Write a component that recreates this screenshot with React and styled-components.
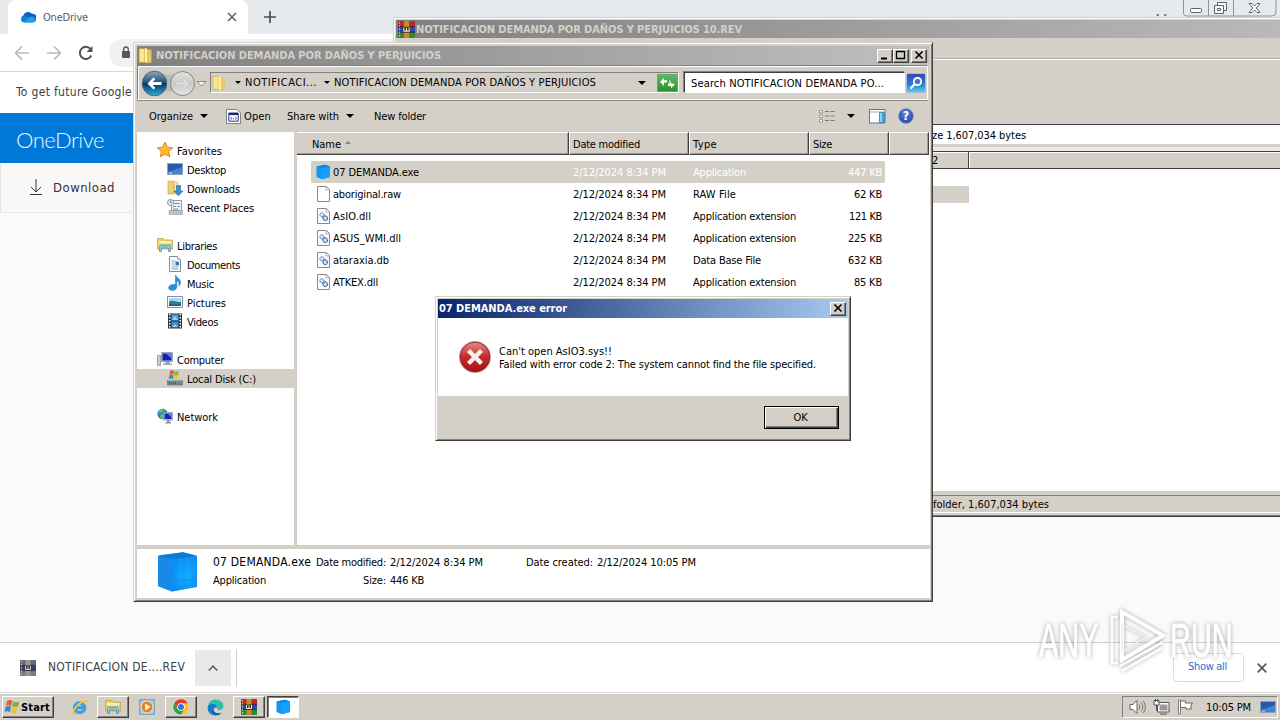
import React, { useLayoutEffect, useRef, useState } from 'react';
import styled, { createGlobalStyle, css } from 'styled-components';

const FACE = '#d4d0c8';
const DARK = '#404040';
const MID = '#808080';

const navGroups = [
  {
    icon: 'star',
    label: 'Favorites',
    width: 45,
    items: [
      { icon: 'desktop', label: 'Desktop', width: 39 },
      { icon: 'downloads', label: 'Downloads', width: 53 },
      { icon: 'recent', label: 'Recent Places', width: 67 },
    ],
  },
  {
    icon: 'libraries',
    label: 'Libraries',
    width: 40,
    items: [
      { icon: 'document', label: 'Documents', width: 53 },
      { icon: 'music', label: 'Music', width: 27 },
      { icon: 'picture', label: 'Pictures', width: 39 },
      { icon: 'video', label: 'Videos', width: 31 },
    ],
  },
  {
    icon: 'computer',
    label: 'Computer',
    width: 47,
    items: [{ icon: 'disk', label: 'Local Disk (C:)', width: 69, active: true }],
  },
  { icon: 'network', label: 'Network', width: 41, items: [] },
];

const files = [
  { icon: 'cube', name: '07 DEMANDA.exe', width: 86, type: 'Application', typeWidth: 53, size: '447 KB', sizeWidth: 34, active: true },
  { icon: 'file', name: 'aboriginal.raw', width: 68, type: 'RAW File', typeWidth: 43, size: '62 KB', sizeWidth: 28 },
  { icon: 'dll', name: 'AsIO.dll', width: 38, type: 'Application extension', typeWidth: 103, size: '121 KB', sizeWidth: 33 },
  { icon: 'dll', name: 'ASUS_WMI.dll', width: 68, type: 'Application extension', typeWidth: 103, size: '225 KB', sizeWidth: 34 },
  { icon: 'dll', name: 'ataraxia.db', width: 56, type: 'Data Base File', typeWidth: 68, size: '632 KB', sizeWidth: 34 },
  { icon: 'dll', name: 'ATKEX.dll', width: 45, type: 'Application extension', typeWidth: 103, size: '85 KB', sizeWidth: 28 },
];

const icons = {
  cloud: (
    <>
      <path d="M3.500 13a3.500 3.500 0 0 1-.2-6.500A5 5 0 0 1 12 4.800a4 4 0 0 1 1.500 8.200z" fill="#0a5fb8" />
      <path d="M1.500 12C.5 9 3 6.500 6 6.800L14.500 12Q14 13.400 13 13.400H4Q2.500 13.400 1.500 12z" fill="#1680da" />
      <path d="M9 8.500a4 4 0 0 1 6.700 2.600 2.200 2.200 0 0 1-2.100 2.300H4z" fill="#25a0e8" />
    </>
  ),
  folder: (
    <>
      <path d="M2 1.500h6v13H2z" fill="#e9c557" stroke="#c9a136" strokeWidth=".5" />
      <path d="M2.500 2h4v12h-4z" fill="#fbe98f" />
      <path d="M7.500 1l2.500.8V15l-2.500-.6z" fill="#fff3b0" />
      <path d="M10 2l3.500 1v11.500L10 15z" fill="#ecca5e" stroke="#d6b24b" strokeWidth=".4" />
    </>
  ),
  star: (
    <path d="M8 0l2.300 5.200 5.500.6-4.200 3.700 1.200 5.400L8 12.100l-4.800 2.800 1.200-5.400L.2 5.800l5.500-.6z" fill="#fdb82b" stroke="#d8791c" strokeWidth=".9" />
  ),
  desktop: (
    <>
      <path d="M.5 2.500h15v11H.5z" fill="#2b62b5" stroke="#8ba2bd" />
      <path d="M1 3h14v4L1 11z" fill="#2459ac" />
      <path d="M1 11l14-5v7H1z" fill="#3f84d6" />
      <path d="M2 12h3" stroke="#c7def5" />
    </>
  ),
  downloads: (
    <>
      <path d="M1 1h6v13H1z" fill="#efd06c" stroke="#c9a136" strokeWidth=".6" />
      <path d="M7 1.500l4 1v12l-4-1z" fill="#fbe9a0" stroke="#cfa93c" strokeWidth=".6" />
      <path d="M9.500 5.500h4V11H16l-4.500 4.800L7 11h2.500z" fill="#2e93e0" stroke="#1764ab" strokeWidth=".6" />
    </>
  ),
  recent: (
    <>
      <path d="M4.500 1.500h10v10h-10z" fill="#eef3f6" stroke="#8d9ba6" />
      <path d="M2 11.500h13.500v4H2z" fill="#b7c3cc" stroke="#8794a0" strokeWidth=".5" />
      <path d="M7 4.500h5.500M6 7.500h3M10.500 7.500h2.500M6 10h5" stroke="#6d8aa3" strokeWidth="1.200" />
      <circle cx="3.500" cy="3.500" r="3" fill="#e3edf5" stroke="#8294a4" />
      <path d="M3.500 1.500v2H5" stroke="#48637d" fill="none" strokeWidth=".7" />
    </>
  ),
  libraries: (
    <>
      <path d="M.5 1.500h6l1 1.500h8v9H.5z" fill="#eccd67" stroke="#c59e35" strokeWidth=".7" />
      <path d="M2 4h12v7H2z" fill="#fff3b4" />
      <path d="M2 6.500h12v2H2z" fill="#a2d09a" />
      <path d="M2.500 14.500V9.500a1 1 0 0 1 1-1h9a1 1 0 0 1 1 1v5h-2V11h-7v3.500z" fill="#8ec7ec" stroke="#438abf" strokeWidth=".7" />
    </>
  ),
  document: (
    <>
      <path d="M2.500.5h8l3 3v12h-11z" fill="#fff" stroke="#7c8c9c" />
      <path d="M10.500.5v3h3" fill="#dce6ef" stroke="#7c8c9c" strokeWidth=".6" />
      <path d="M4.500 5h4M4.500 7h3M4.500 9h3M4.500 11h7M4.500 13h7" stroke="#6aa0d0" strokeWidth=".9" />
      <path d="M8.500 5.500h3.500v4H8.500z" fill="#4478a8" />
    </>
  ),
  music: (
    <path d="M8.500 0c1.300 3.200 5 3.600 5 7.300 0 1.500-.6 2.700-1.600 3.800.9-3.300-.6-4.800-2.100-5.300v6.100c0 2-2.200 3.600-4.600 3.500-2.500 0-3.800-1.400-3.500-3.100.3-1.800 2.700-3 5.100-2.800.6 0 1.100.1 1.700.3z" fill="#2b90dc" stroke="#1868ac" strokeWidth=".5" />
  ),
  picture: (
    <>
      <path d="M.5 2.500h15v11H.5z" fill="#fff" stroke="#8091a1" />
      <path d="M2 4h12v8H2z" fill="#a4d8f2" />
      <path d="M2 8c3-3 6 0 12 0v4H2z" fill="#2e7d91" />
      <path d="M2 10.500h12V12H2z" fill="#1f5a8a" />
    </>
  ),
  video: (
    <>
      <path d="M1 .5h14v15H1z" fill="#26323f" />
      <path d="M4.500 1.500h7v6h-7z" fill="#4fa2de" />
      <path d="M4.500 8.500h7v6h-7z" fill="#3f8bd0" />
      <path d="M5 7l3-4 3 4M5 14l3-3 3 3" fill="#9fcfe9" />
      <path d="M2.700 1v14M13.300 1v14" stroke="#fff" strokeWidth="1.500" strokeDasharray="1.500 1.500" />
    </>
  ),
  computer: (
    <>
      <path d="M.5 4.500h3v10h-3z" fill="#c9ced6" stroke="#808894" strokeWidth=".7" />
      <path d="M4.500 1.500h11v9h-11z" fill="#b7c3d6" stroke="#8a95aa" strokeWidth=".8" />
      <path d="M5.500 2.500h9v7h-9z" fill="#1420b0" />
      <path d="M9 2.500h5.500v5z" fill="#5c7df0" />
      <path d="M8 11h5v1.500h2V14H6v-1.500h2z" fill="#9ba6b8" />
    </>
  ),
  disk: (
    <>
      <path d="M.5 10.500h15v4.500H.5z" fill="#6e8f91" stroke="#4d6365" strokeWidth=".6" />
      <path d="M2 8.500h12.500l1 2H.5z" fill="#c3cdcd" />
      <path d="M2 13h8" stroke="#2f5d62" strokeWidth="1.500" strokeDasharray="1 1" />
      <path d="M3 .8q2-1 4 0l-.5 4q-2-1-4 0z" fill="#e8582a" />
      <path d="M7.600 1q2 1 4.200 0l-.6 4q-2 1-4 0z" fill="#7fbb3a" />
      <path d="M2.300 5.300q2.500-1 4.200 0L6 9q-2.200-1-4.200 0z" fill="#3f86d3" />
      <path d="M7.100 5.600q1.800 1 4 0l-.5 3.700q-2 1-4 0z" fill="#f8c631" />
    </>
  ),
  network: (
    <>
      <circle cx="5.500" cy="6" r="5.200" fill="#2690b5" />
      <path d="M2 3q3-3 5-2.500L5 4 2 5zM4 6l3 1-1 4-3-2z" fill="#68c467" />
      <path d="M6.500 4.500h9v7.500h-9z" fill="#bdc9dc" stroke="#8190aa" strokeWidth=".7" />
      <path d="M7.500 5.500h7V11h-7z" fill="#1a23bb" />
      <path d="M10.500 5.500h4v4z" fill="#627ff0" />
      <path d="M10 12h2.500v2H14v1.500H8.500V14H10z" fill="#8b98ad" />
    </>
  ),
  cube: (
    <>
      <path d="M1.500 2.500L10 .8l5 1.700v10.500L7 15.200 1.500 13z" fill="#1494f6" />
      <path d="M1.500 2.500L10 .8l5 1.700L7 4z" fill="#0b84e6" />
      <path d="M7 4l8-1.500v10.500L7 15.200z" fill="#169fff" />
    </>
  ),
  file: (
    <>
      <path d="M2.500.5h9l3 3v12h-12z" fill="#fff" stroke="#8a8a8a" />
      <path d="M11 1v3h3" fill="#eee" stroke="#9a9a9a" strokeWidth=".7" />
    </>
  ),
  dll: (
    <>
      <path d="M2.500.5h9l3 3v12h-12z" fill="#fafcff" stroke="#8a8a8a" />
      <path d="M11 1v3h3" fill="#eee" stroke="#9a9a9a" strokeWidth=".7" />
      <circle cx="7" cy="6.800" r="2.100" fill="#dcebf8" stroke="#3a6fa0" strokeDasharray="1.200 .4" />
      <circle cx="10.200" cy="10.200" r="2.300" fill="#cfe2f3" stroke="#24598c" strokeWidth="1.200" strokeDasharray="1.200 .4" />
    </>
  ),
  openApp: (
    <>
      <path d="M.5.500h11l4 3.500v11.500H.5z" fill="#fff" stroke="#6f7c86" />
      <path d="M3 4.500h10V13H3z" fill="#fff" stroke="#16277a" />
      <path d="M3 4h10v2.500H3z" fill="#16277a" />
      <path d="M6 8.500L5 10l1 1.500M10 8.500l1 1.500-1 1.500M8 9.500v1.500" stroke="#2c4a9c" fill="none" />
    </>
  ),
  ie: (
    <>
      <path d="M14 9.500H5.300c.2 2.600 4 3.200 5.400.8h3c-2.200 5.300-11.400 4.500-11.400-2.200S11 .9 13.500 5.800c.5 1 .6 2.400.5 3.700zM5.400 7.100h5.300c-.3-2.800-5-2.800-5.300 0z" fill="#3ba5e4" stroke="#207dbd" strokeWidth=".5" />
      <path d="M2.500 15.500C-1.500 13.500 4.500 4 12 1.200c4-1.300 4.300 1.500 2.700 4.200C16.200.400 9 3 5 8.500c-3 4-3 6.500.5 5-1.500 1.400-2.300 2.300-3 2z" fill="#f2c53d" />
    </>
  ),
  wmp: (
    <>
      <rect x=".7" y=".7" width="14.600" height="14.600" fill="#a8cbe8" stroke="#5b9bd0" />
      <circle cx="8" cy="8" r="6" fill="#f08418" stroke="#fff" strokeWidth=".7" />
      <path d="M6.200 4.700v6.600L11.500 8z" fill="#fff" />
    </>
  ),
  chrome: (
    <>
      <circle cx="8" cy="8" r="7.600" fill="#fbc117" />
      <path d="M1.400 4.200A7.600 7.600 0 0 1 14.600 4.200H8L4.700 9.900z" fill="#e33b2e" />
      <path d="M1.400 4.200A7.600 7.600 0 0 0 8 15.600l3.300-5.700H4.700z" fill="#2aa14b" />
      <circle cx="8" cy="8" r="3.800" fill="#fff" />
      <circle cx="8" cy="8" r="3" fill="#2f74e0" />
    </>
  ),
  edge: (
    <>
      <path d="M.5 8A7.500 7.500 0 0 1 8 .5c4.500 0 7.500 3 7.500 6.200 0 2.500-2 3.800-4 3.800-1.600 0-2.200-.7-1.800-1.500C10.500 7 9 5.500 7 5.500 3.500 5.500.5 6.700.5 8z" fill="#31c0a6" />
      <path d="M.5 8C1 5.200 4 4 7 5c2 .6 3 2 2.700 3.300C6 7 4.500 12 9.500 13.500c2 .6 4-.2 4.800-1.300A7.700 7.700 0 0 1 8 15.600 7.500 7.500 0 0 1 .5 8z" fill="#1479cd" />
      <path d="M6 8.500c-1.200 4 3 6.600 7.500 4.500C10 17 3 14 6 8.500z" fill="#0d57a6" />
    </>
  ),
};

function Icon({ name, size = 16 }) {
  return (
    <Glyph width={size} height={size} viewBox="0 0 16 16">
      {icons[name]}
    </Glyph>
  );
}

function RarIcon({ size = 16, muted }) {
  const c = muted
    ? ['#5f6c80', '#36406f', '#7c7c7c', '#97968f', '#d6d6d6']
    : ['#b8292b', '#2c47a8', '#2c8a35', '#c98a2e', '#ffe8b0'];
  return (
    <Glyph width={size} height={size} viewBox="0 0 16 16">
      <path d="M0 0h16v5.300H0z" fill={c[0]} />
      <path d="M0 5.300h16v5.300H0z" fill={c[1]} />
      <path d="M0 10.600h16V16H0z" fill={c[2]} />
      <path d="M0 5.300h16M0 10.600h16" stroke="#2a2025" strokeWidth=".8" />
      <path d="M5.500 0h5v16h-5z" fill={c[3]} />
      <path d="M4.500 5.500h7v5.500h-7z" fill="#3c3438" />
      <path d="M5.500 6v3.500h5V6M8 6.500v3" stroke={c[4]} fill="none" />
      <path d="M1.500 1v14" stroke={c[4]} strokeDasharray="1.500 1.500" strokeWidth=".8" />
    </Glyph>
  );
}

// Tracks the letters out (or in) so that a label fills its given width
function Text({ width, children, ...rest }) {
  const ref = useRef(null);
  const [spacing, setSpacing] = useState(0);

  useLayoutEffect(() => {
    ref.current.style.letterSpacing = '0px';
    const natural = ref.current.getBoundingClientRect().width;
    const next = (width - natural) / children.length;
    ref.current.style.letterSpacing = `${next}px`;
    setSpacing(next);
  }, [width, children]);

  return (
    <Label {...rest}>
      <span ref={ref} style={{ letterSpacing: `${spacing}px` }}>
        {children}
      </span>
    </Label>
  );
}

function CaptionButton({ kind }) {
  return (
    <CaptionFrame>
      <svg width="12" height="10" viewBox="0 0 12 10">
        {kind === 'min' && <path d="M2 8.500h6" stroke="#000" strokeWidth="2" />}
        {kind === 'max' && (
          <path d="M1.500 1.500h8v7h-8zM1 1.500h9" stroke="#000" strokeWidth="1.300" fill="none" />
        )}
        {kind === 'close' && <path d="M2.500 1.500l7 7M9.500 1.500l-7 7" stroke="#000" strokeWidth="1.600" />}
      </svg>
    </CaptionFrame>
  );
}

function Browser() {
  return (
    <BrowserWindow>
      <TabStrip>
        <Tab>
          <Icon name="cloud" />
          <Text width={45} $color="#5a5d61">OneDrive</Text>
          <TabClose width="10" height="10" viewBox="0 0 10 10">
            <path d="M1 1l8 8M9 1L1 9" stroke="#5f6368" strokeWidth="1.600" />
          </TabClose>
        </Tab>
        <NewTab width="12" height="12" viewBox="0 0 12 12">
          <path d="M6 0v12M0 6h12" stroke="#4b4f54" strokeWidth="1.700" />
        </NewTab>
        <WindowControls width="121" height="17" viewBox="0 0 121 17">
          <path d="M.5 15h2.500M8 15h2.500" stroke="#5d6165" strokeWidth="1.500" />
          <path d="M27.500 0v13q0 3 3 3H116q4 0 4-4V0M52.500 0v16M77.500 0v16" stroke="#8d959c" fill="none" />
          <rect x="34.500" y="8.500" width="11" height="4" rx="1" fill="#fff" stroke="#5c646c" />
          <path d="M61.500 5.500V2.500h9v8h-3M58.500 5.500h9v8h-9zM61.500 8.500h3v2h-3z" fill="#f6f8fa" stroke="#5c646c" />
          <path d="M93 3.500h3l2.500 2.500L101 3.500h3L100.300 8l3.700 4.500h-3L98.500 10 96 12.500h-3L96.700 8z" fill="#fff" stroke="#5c646c" />
        </WindowControls>
      </TabStrip>
      <BrowserToolbar>
        <svg width="16" height="16" viewBox="0 0 16 16">
          <path d="M15 8H2M8 1.500L1.500 8 8 14.500" stroke="#b8babd" strokeWidth="1.700" fill="none" />
        </svg>
        <svg width="16" height="16" viewBox="0 0 16 16">
          <path d="M1 8h13M8 1.500L14.500 8 8 14.500" stroke="#b8babd" strokeWidth="1.700" fill="none" />
        </svg>
        <svg width="16" height="16" viewBox="0 0 16 16">
          <path d="M13.300 10.500A6 6 0 1 1 12.500 4" stroke="#505357" strokeWidth="2" fill="none" />
          <path d="M14.500 1v6h-6z" fill="#505357" />
        </svg>
        <Omnibox>
          <svg width="10" height="13" viewBox="0 0 10 13">
            <rect x="1" y="5" width="8" height="7" rx="1" fill="#55585c" />
            <path d="M2.700 5V3.300a2.300 2.300 0 0 1 4.600 0V5" stroke="#55585c" strokeWidth="1.300" fill="none" />
          </svg>
        </Omnibox>
      </BrowserToolbar>
      <InfoBar>
        <Text width={116} $size={12} $color="#3c3f43">To get future Google</Text>
      </InfoBar>
      <PageHeader>
        <Text width={88} $size={22} $color="#e8f4ff" $light>OneDrive</Text>
      </PageHeader>
      <PageCommand>
        <svg width="12" height="17" viewBox="0 0 12 17">
          <path d="M6 0v13M1 8l5 5 5-5M0 15.500h12" stroke="#333" fill="none" />
        </svg>
        <Text width={62} $size={13} $color="#333">Download</Text>
      </PageCommand>
      <PageBody />
      <DownloadBar>
        <RarIcon muted />
        <DownloadName>
          <Text width={137} $size={12} $color="#3c3f43">NOTIFICACION DE....REV</Text>
        </DownloadName>
        <DownloadMenu>
          <svg width="10" height="6" viewBox="0 0 10 6">
            <path d="M.7 5.500L5 1.200l4.300 4.300" stroke="#5f6368" strokeWidth="1.600" fill="none" />
          </svg>
        </DownloadMenu>
        <DownloadDivider />
        <ShowAll>
          <Text width={39} $color="#2b6fd0">Show all</Text>
        </ShowAll>
        <svg width="10" height="10" viewBox="0 0 10 10">
          <path d="M.7.700l8.600 8.600M9.300.700L.7 9.300" stroke="#55585c" strokeWidth="1.800" />
        </svg>
      </DownloadBar>
    </BrowserWindow>
  );
}

function Archive() {
  return (
    <ArchiveWindow>
      <TitleBar $gap={1}>
        <RarIcon size={17} />
        <Text width={326} $bold $color={FACE}>NOTIFICACION DEMANDA POR DAÑOS Y PERJUICIOS 10.REV</Text>
      </TitleBar>
      <ArchiveMenu />
      <ArchiveTools />
      <ArchivePath>
        <Text width={94}>ze 1,607,034 bytes</Text>
      </ArchivePath>
      <ArchiveHeader>
        <ArchiveColumn>
          <Text width={6}>2</Text>
        </ArchiveColumn>
      </ArchiveHeader>
      <ArchiveList>
        <ArchiveSelection />
      </ArchiveList>
      <ArchiveStatus>
        <Text width={116}>folder, 1,607,034 bytes</Text>
      </ArchiveStatus>
    </ArchiveWindow>
  );
}

function AddressBar() {
  return (
    <AddressRow>
      <NavButtons width="72" height="28" viewBox="0 0 72 28">
        <defs>
          <linearGradient id="back" x1="0" y1="0" x2="0" y2="1">
            <stop offset="0" stopColor="#8fa9bd" />
            <stop offset=".48" stopColor="#1c4e79" />
            <stop offset=".5" stopColor="#07355f" />
            <stop offset="1" stopColor="#2cb0e4" />
          </linearGradient>
          <linearGradient id="forward" x1="0" y1="0" x2="0" y2="1">
            <stop offset="0" stopColor="#e2e2e0" />
            <stop offset=".5" stopColor="#cbcbc9" />
            <stop offset="1" stopColor="#e4e4e2" />
          </linearGradient>
        </defs>
        <path d="M14 3Q28 9 42 3v22q-14-6-28 0z" fill="#b9b9b6" />
        <circle cx="15.500" cy="14.500" r="12.300" fill="url(#back)" stroke="#52687a" />
        <path d="M8.500 14.500l6-6 1.800 1.800-2.600 2.700h8.800v3h-8.800l2.600 2.700-1.800 1.800z" fill="#fff" />
        <circle cx="43.500" cy="14.500" r="12" fill="url(#forward)" stroke="#858585" />
        <path d="M50.500 14.500l-6-6-1.800 1.800 2.600 2.700h-8.800v3h8.800l-2.600 2.700 1.800 1.800z" fill="#dededc" stroke="#b6b6b4" strokeWidth=".5" />
        <path d="M58 12.500h9l-4.500 4.500z" fill="#f2f2f2" stroke="#777" strokeWidth=".8" />
      </NavButtons>
      <PathBox>
        <Icon name="folder" />
        <Arrow $size={3} $left={8} />
        <Text width={72}>NOTIFICACI...</Text>
        <Arrow $size={3} $left={7} />
        <Text width={262}>NOTIFICACION DEMANDA POR DAÑOS Y PERJUICIOS</Text>
        <Arrow $size={4} $left={42} />
        <GoButton>
          <svg width="17" height="14" viewBox="0 0 17 14">
            <path d="M1 6l4-4v2.300h3v2.200H6.500L5 6.500V10z" fill="#fff" />
            <path d="M16 8l-4 4.500V10H9V7.500h1.500V3.500l2 4z" fill="#fff" />
          </svg>
        </GoButton>
      </PathBox>
      <SearchBox>
        <Text width={193}>Search NOTIFICACION DEMANDA PO...</Text>
      </SearchBox>
      <SearchButton>
        <svg width="14" height="14" viewBox="0 0 14 14">
          <circle cx="8.500" cy="5.500" r="3.700" fill="#4a75d0" stroke="#fff" strokeWidth="1.800" />
          <path d="M5.800 8L1.500 12.500" stroke="#fff" strokeWidth="2.400" />
        </svg>
      </SearchButton>
    </AddressRow>
  );
}

function Explorer() {
  return (
    <ExplorerWindow>
      <TitleBar>
        <Icon name="folder" size={17} />
        <Text width={285} $bold $color={FACE}>NOTIFICACION DEMANDA POR DAÑOS Y PERJUICIOS</Text>
        <CaptionButtons>
          <CaptionButton kind="min" />
          <CaptionButton kind="max" />
          <CaptionGap />
          <CaptionButton kind="close" />
        </CaptionButtons>
      </TitleBar>
      <AddressBar />
      <CommandBar>
        <Text width={44}>Organize</Text>
        <Arrow $size={4} $left={7} />
        <OpenCommand>
          <Icon name="openApp" size={15} />
          <Text width={27}>Open</Text>
        </OpenCommand>
        <Command>
          <Text width={52}>Share with</Text>
          <Arrow $size={4} $left={7} />
        </Command>
        <Command $gap={20}>
          <Text width={52}>New folder</Text>
        </Command>
        <ViewTools>
          <svg width="16" height="14" viewBox="0 0 16 14">
            <path d="M.5 1.500h3v2.500h-3zM.5 6h3v2.500h-3zM.5 10.500h3V13h-3z" fill="#fff" stroke="#777" strokeWidth=".7" />
            <path d="M6 2.500h4M11.500 2.500h4M6 7h4M11.500 7h4M6 11.500h4M11.500 11.500h4" stroke="#76777e" />
          </svg>
          <Arrow $size={4} />
          <svg width="17" height="15" viewBox="0 0 17 15">
            <path d="M.5.500h15.500v13.500H.5z" fill="#fff" stroke="#547aa8" />
            <path d="M1 3h15" stroke="#8fb0d5" />
            <path d="M10.500 3.500h5V13.500h-5z" fill="#8fd0ea" stroke="#2f78a8" strokeWidth=".8" />
            <path d="M13 4h2v9h-2z" fill="#4aa5cf" />
          </svg>
          <Help>?</Help>
        </ViewTools>
      </CommandBar>
      <Content>
        <NavPane>
          {navGroups.map(group => (
            <NavGroup key={group.label}>
              <NavRow>
                <Icon name={group.icon} />
                <Text width={group.width}>{group.label}</Text>
              </NavRow>
              {group.items.map(item => (
                <NavRow key={item.label} $nested $active={item.active}>
                  <Icon name={item.icon} />
                  <Text width={item.width}>{item.label}</Text>
                </NavRow>
              ))}
            </NavGroup>
          ))}
        </NavPane>
        <FilePane>
          <HeaderRow>
            <HeaderCell $first>
              <Text width={29}>Name</Text>
              <SortMark />
            </HeaderCell>
            <HeaderCell><Text width={67}>Date modified</Text></HeaderCell>
            <HeaderCell><Text width={24}>Type</Text></HeaderCell>
            <HeaderCell><Text width={19}>Size</Text></HeaderCell>
            <HeaderCell />
          </HeaderRow>
          <FileRows>
            {files.map(file => (
              <FileRow key={file.name} $active={file.active}>
                <FileName>
                  <Icon name={file.icon} />
                  <Text width={file.width}>{file.name}</Text>
                </FileName>
                <FileValue><Text width={93}>2/12/2024 8:34 PM</Text></FileValue>
                <FileValue><Text width={file.typeWidth}>{file.type}</Text></FileValue>
                <FileSize><Text width={file.sizeWidth}>{file.size}</Text></FileSize>
              </FileRow>
            ))}
          </FileRows>
        </FilePane>
      </Content>
      <Details>
        <svg width="42" height="42" viewBox="0 0 42 42">
          <defs>
            <radialGradient id="cube" cx=".55" cy=".55" r=".6">
              <stop offset="0" stopColor="#12b0ff" />
              <stop offset="1" stopColor="#0d8bf4" />
            </radialGradient>
          </defs>
          <path d="M1 5.500Q1 4.500 2 4.300L26 1.200 39 4.500q1 .3 1 1.500v29.500L15 40.500 2 35.500Q1 35 1 34z" fill="#1593f3" />
          <path d="M1.500 5L26 1.200 40 5 15 8.500z" fill="#0c79d2" />
          <path d="M15 8.500L40 5v31l-25 4.500z" fill="url(#cube)" />
          <path d="M1 5l14 3.500v32L1 35z" fill="#1889e4" />
          <path d="M15 30l25-2M1 29l14 1M27 7v31" stroke="#0c86e6" strokeWidth=".6" />
        </svg>
        <DetailColumn $wide>
          <Text width={98} $size={12}>07 DEMANDA.exe</Text>
          <Text width={53}>Application</Text>
        </DetailColumn>
        <DetailColumn $right>
          <Text width={70}>Date modified:</Text>
          <Text width={23}>Size:</Text>
        </DetailColumn>
        <DetailColumn $value>
          <Text width={93}>2/12/2024 8:34 PM</Text>
          <Text width={34}>446 KB</Text>
        </DetailColumn>
        <DetailColumn $created>
          <Text width={67}>Date created:</Text>
        </DetailColumn>
        <DetailColumn>
          <Text width={99}>2/12/2024 10:05 PM</Text>
        </DetailColumn>
      </Details>
    </ExplorerWindow>
  );
}

function ErrorDialog() {
  return (
    <DialogWindow>
      <TitleBar $active>
        <Text width={128} $bold $color="#fff">07 DEMANDA.exe error</Text>
        <CaptionButtons>
          <CaptionButton kind="close" />
        </CaptionButtons>
      </TitleBar>
      <DialogBody>
        <svg width="34" height="34" viewBox="0 0 34 34">
          <defs>
            <linearGradient id="error" x1="0" y1="0" x2="0" y2="1">
              <stop offset="0" stopColor="#e28b86" />
              <stop offset=".5" stopColor="#c8282b" />
              <stop offset="1" stopColor="#a50f16" />
            </linearGradient>
          </defs>
          <circle cx="17" cy="17" r="16" fill="#b7a7a7" />
          <circle cx="17" cy="17" r="14.800" fill="url(#error)" stroke="#8e1c20" strokeWidth=".8" />
          <path d="M10.500 10.500l13 13M23.500 10.500l-13 13" stroke="#f3eeea" strokeWidth="4.500" />
        </svg>
        <Message>
          <Text width={113}>Can't open AsIO3.sys!!</Text>
          <Text width={317}>Failed with error code 2: The system cannot find the file specified.</Text>
        </Message>
      </DialogBody>
      <DialogFooter>
        <OkButton>
          <Text width={14}>OK</Text>
        </OkButton>
      </DialogFooter>
    </DialogWindow>
  );
}

function Watermark() {
  return (
    <WatermarkRow>
      <MarkWord $width={65}><span>ANY</span></MarkWord>
      <svg width="62" height="66" viewBox="0 0 62 66">
        <path d="M18 5L59 28.500 18 53z" fill="none" stroke="#fff" strokeWidth="4" />
        <path d="M18 18l24 12-24 15z" fill="none" stroke="#eee" strokeWidth="1.500" />
        <path d="M14 10H8v46h6M16 59l43-24M18 64l40-23" fill="none" stroke="#fff" strokeWidth="2.500" />
      </svg>
      <MarkWord $width={62}><span>RUN</span></MarkWord>
    </WatermarkRow>
  );
}

function Taskbar() {
  return (
    <TaskbarRow>
      <StartButton>
        <svg width="16" height="16" viewBox="0 0 16 16">
          <path d="M3 2q3-2 5.500 0L7.300 7q-3-1.500-5.500 0z" fill="#e8622d" />
          <path d="M9.300 2.500q3 1.500 6 0l-1.500 5q-3 1.500-5.500 0z" fill="#75b443" />
          <path d="M1.600 8q3-1.800 5.500 0l-1.200 5q-3-1.500-5.500 0z" fill="#3f82cf" />
          <path d="M8 8.500q2.500 1.500 5.600 0l-1.500 5q-3 1.500-5.300 0z" fill="#f5bf2d" />
        </svg>
        <Text width={29} $bold>Start</Text>
      </StartButton>
      <TaskItems>
        <TaskItem><Icon name="ie" size={17} /></TaskItem>
        <TaskItem $raised><Icon name="libraries" /></TaskItem>
        <TaskItem><Icon name="wmp" /></TaskItem>
        <TaskItem $raised><Icon name="chrome" /></TaskItem>
        <TaskItem><Icon name="edge" size={17} /></TaskItem>
        <TaskItem $raised><RarIcon /></TaskItem>
        <TaskItem $pressed><Icon name="cube" /></TaskItem>
      </TaskItems>
      <Tray>
        <svg width="17" height="16" viewBox="0 0 17 16">
          <path d="M1 5.500h3L8 1.500v13l-4-4H1z" fill="#fff" stroke="#666" />
          <path d="M10 5.500q2 2.500 0 5M12.200 3.500q3.300 4.500 0 9M14.400 2q4 6 0 12" fill="none" stroke="#777" />
        </svg>
        <svg width="17" height="16" viewBox="0 0 17 16">
          <path d="M4.500 3.500h11.500v9.500H4.500z" fill="#fff" stroke="#555" />
          <path d="M6.500 5.500h8v6h-8z" fill="#999" />
          <path d="M7 15h7" stroke="#555" />
          <path d="M1 1.500h5V6H1zM3.500 6v6" fill="#fff" stroke="#555" />
          <path d="M2.500 0v3M4.700 0v3" stroke="#555" />
        </svg>
        <svg width="17" height="16" viewBox="0 0 17 16">
          <path d="M1.500 1h2v14h-2z" fill="#fff" stroke="#666" strokeWidth=".8" />
          <path d="M3.500 2h5v2h7l-2 3 1 3H9V8.500H3.500z" fill="#fff" stroke="#666" />
        </svg>
        <Clock><Text width={45}>10:05 PM</Text></Clock>
        <Icon name="desktop" />
      </Tray>
    </TaskbarRow>
  );
}

export default function App() {
  return (
    <>
      <GlobalStyle />
      <Screen>
        <Browser />
        <Archive />
        <Explorer />
        <ErrorDialog />
        <Watermark />
        <Taskbar />
      </Screen>
    </>
  );
}

const GlobalStyle = createGlobalStyle`
  * {
    box-sizing: border-box;
  }

  body {
    margin: 0;
    overflow: hidden;
    font-family: 'DejaVu Sans Condensed', 'DejaVu Sans', sans-serif;
    font-stretch: condensed;
    font-size: 11px;
    color: #000;
  }

  svg {
    display: block;
    flex: none;
  }
`;

const raised = css`
  border: 1px solid;
  border-color: #fff ${DARK} ${DARK} #fff;
  box-shadow: inset -1px -1px 0 ${MID};
`;

const windowFrame = css`
  position: absolute;
  display: flex;
  flex-direction: column;
  padding: 2px;
  background: ${FACE};
  border: 1px solid;
  border-color: ${FACE} ${DARK} ${DARK} ${FACE};
  box-shadow: inset 1px 1px 0 #fff, inset -1px -1px 0 ${MID};
`;

const Screen = styled.div`
  position: relative;
  display: flex;
  flex-direction: column;
  width: 1280px;
  height: 720px;
  overflow: hidden;
`;

const Glyph = styled.svg`
  flex: none;
`;

const Label = styled.span`
  flex: none;
  white-space: pre;
  line-height: 13px;
  font-size: ${p => p.$size || 11}px;
  font-weight: ${p => (p.$bold ? 700 : 400)};
  color: ${p => p.$color || 'inherit'};
  ${p =>
    p.$light &&
    css`
      font-family: 'Lato', sans-serif;
      font-stretch: normal;
      font-weight: 300;
    `}
`;

const BrowserWindow = styled.div`
  display: flex;
  flex-direction: column;
  height: 692px;
  background: #fafafa;
`;

const TabStrip = styled.div`
  display: flex;
  align-items: flex-start;
  height: 34px;
  padding-left: 8px;
  background: #e7eaed;
`;

const Tab = styled.div`
  display: flex;
  align-items: center;
  gap: 7px;
  width: 240px;
  height: 34px;
  padding: 0 11px 0 12px;
  background: #fff;
  border-radius: 8px 8px 0 0;
`;

const TabClose = styled.svg`
  margin-left: auto;
`;

const NewTab = styled.svg`
  margin: 11px 0 0 16px;
`;

const WindowControls = styled.svg`
  margin-left: auto;
  margin-right: 3px;
`;

const BrowserToolbar = styled.div`
  display: flex;
  align-items: center;
  gap: 16px;
  height: 38px;
  padding-left: 14px;
  background: #fff;
  border-bottom: 1px solid #d5d7da;
`;

const Omnibox = styled.div`
  display: flex;
  align-items: center;
  width: 700px;
  height: 28px;
  margin-left: -1px;
  padding-left: 12px;
  background: #eff1f3;
  border-radius: 14px;
`;

const InfoBar = styled.div`
  display: flex;
  align-items: center;
  height: 41px;
  padding-left: 16px;
  background: #fff;
`;

const PageHeader = styled.div`
  display: flex;
  align-items: center;
  height: 50px;
  padding: 3px 0 0 16px;
  background: #0078d7;
`;

const PageCommand = styled.div`
  display: flex;
  align-items: center;
  gap: 11px;
  height: 50px;
  padding-left: 29px;
  background: #f8f8f8;
  border-bottom: 1px solid #eaeaea;
  border-left: 1px solid #e4e4e4;
`;

const PageBody = styled.div`
  flex: 1;
`;

const DownloadBar = styled.div`
  display: flex;
  align-items: center;
  height: 50px;
  padding: 0 13px 0 20px;
  background: #fff;
  border-top: 1px solid #d2d2d2;
`;

const DownloadName = styled.div`
  display: flex;
  width: 147px;
  margin-left: 12px;
`;

const DownloadMenu = styled.div`
  display: flex;
  align-items: center;
  justify-content: center;
  width: 36px;
  height: 36px;
  background: #e9e9e9;
`;

const DownloadDivider = styled.div`
  width: 1px;
  height: 38px;
  margin-left: 5px;
  background: #ccc;
`;

const ShowAll = styled.div`
  display: flex;
  align-items: center;
  justify-content: center;
  width: 71px;
  height: 29px;
  margin-left: auto;
  margin-right: 13px;
  padding: 0 2px 2px 0;
  border: 1px solid #dadce0;
  border-radius: 4px;
`;

const TitleBar = styled.div`
  display: flex;
  flex: none;
  align-items: center;
  gap: ${p => p.$gap || 2}px;
  height: ${p => (p.$active ? 19 : 18)}px;
  padding: 0 2px;
  padding-left: ${p => (p.$active ? 1 : 2)}px;
  background: ${p =>
    p.$active ? 'linear-gradient(90deg, #0a246a, #a6caf0)' : 'linear-gradient(90deg, #808080, #c0c0c0)'};
`;

const CaptionButtons = styled.div`
  display: flex;
  margin-left: auto;
`;

const CaptionGap = styled.div`
  width: 2px;
`;

const CaptionFrame = styled.div`
  ${raised}
  display: flex;
  align-items: center;
  justify-content: center;
  width: 16px;
  height: 14px;
  padding: 0 1px 1px 0;
  background: ${FACE};
`;

const ArchiveWindow = styled.div`
  ${windowFrame}
  left: 393px;
  top: 17px;
  width: 1000px;
  height: 500px;
`;

const ArchiveMenu = styled.div`
  height: 22px;
  border-bottom: 1px solid #fff;
  box-shadow: inset 0 -1px 0 #b0ada6;
`;

const ArchiveTools = styled.div`
  height: 64px;
`;

const ArchivePath = styled.div`
  display: flex;
  align-items: center;
  height: 20px;
  padding: 2px 0 0 536px;
  background: #fff;
  border-top: 1px solid ${DARK};
`;

const ArchiveHeader = styled.div`
  display: flex;
  height: 18px;
  margin-top: 7px;
  background: ${FACE};
  border-top: 1px solid ${DARK};
  border-bottom: 1px solid ${DARK};
  box-shadow: inset 0 1px 0 #fff, 0 -5px 0 -1px #eceae5, 0 -4px 0 -1px #8b8984;
`;

const ArchiveColumn = styled.div`
  display: flex;
  align-items: center;
  width: 573px;
  padding: 1px 0 0 536px;
  border-right: 1px solid ${DARK};
  box-shadow: 1px 0 0 #fff;
`;

const ArchiveList = styled.div`
  flex: 1;
  padding-top: 17px;
  background: #fff;
`;

const ArchiveSelection = styled.div`
  width: 573px;
  height: 17px;
  background: ${FACE};
`;

const ArchiveStatus = styled.div`
  display: flex;
  align-items: center;
  height: 18px;
  margin: 4px 0 1px;
  padding-left: 537px;
  border-top: 1px solid ${MID};
  border-bottom: 1px solid #fff;
`;

const ExplorerWindow = styled.div`
  ${windowFrame}
  left: 133px;
  top: 42px;
  width: 800px;
  height: 560px;
  padding: 3px;

  ${TitleBar} {
    height: 19px;
    padding-right: 2px;
    padding-left: 0;
  }
`;

const AddressRow = styled.div`
  display: flex;
  flex: none;
  align-items: center;
  height: 35px;
  margin-right: 1px;
  padding-left: 1px;
  border: 1px solid;
  border-color: ${MID} #fff #fff ${MID};
  box-shadow: inset 1px 1px 0 #fff, 0 1px 0 #8d8b87;
`;

const NavButtons = styled.svg`
  margin-right: -1px;
`;

const PathBox = styled.div`
  display: flex;
  align-items: center;
  width: 469px;
  height: 21px;
  border: 1px solid;
  border-color: ${MID} #fff #fff ${MID};
`;

const Arrow = styled.span`
  flex: none;
  width: 0;
  height: 0;
  margin-left: ${p => p.$left || 0}px;
  margin-right: ${p => (p.$size === 3 ? 4 : 0)}px;
  border: ${p => p.$size}px solid transparent;
  border-top-color: #000;
  border-bottom: 0;
`;

const GoButton = styled.div`
  display: flex;
  align-items: center;
  justify-content: center;
  width: 21px;
  height: 18px;
  margin-left: auto;
  background: linear-gradient(#64b868, #259329);
  border: 1px solid #69aa69;
`;

const SearchBox = styled.div`
  display: flex;
  align-items: center;
  width: 221px;
  height: 21px;
  margin-left: 5px;
  padding: 1px 0 0 6px;
  background: #fff;
  border: 1px solid;
  border-color: ${DARK} #fff #fff ${DARK};
  box-shadow: -1px -1px 0 ${MID};
`;

const SearchButton = styled.div`
  display: flex;
  align-items: center;
  justify-content: center;
  width: 20px;
  height: 20px;
  margin-left: 1px;
  background: linear-gradient(#3548b0, #2b7fd0 60%, #53d0ee);
  border: 1px solid #a7bedb;
  border-radius: 2px;
`;

const CommandBar = styled.div`
  display: flex;
  flex: none;
  align-items: center;
  height: 32px;
  padding: 0 16px 0 12px;
`;

const Command = styled.div`
  display: flex;
  align-items: center;
  margin-left: ${p => p.$gap || 16}px;
`;

const OpenCommand = styled(Command)`
  gap: 3px;
  margin-left: 18px;
`;

const ViewTools = styled.div`
  display: flex;
  align-items: center;
  gap: 12px;
  margin-left: auto;

  > svg:nth-of-type(2) {
    margin-left: 2px;
  }
`;

const Help = styled.div`
  width: 16px;
  height: 16px;
  margin-right: -1px;
  background: radial-gradient(circle at 50% 35%, #5b83dd, #1c3a9c);
  border: 1px solid #8d9cc4;
  border-radius: 50%;
  color: #fff;
  font-size: 12px;
  font-weight: 700;
  line-height: 14px;
  text-align: center;
`;

const Content = styled.div`
  display: flex;
  flex: 1;
  margin-right: -1px;
  background: #fff;
`;

const NavPane = styled.div`
  width: 160px;
  padding-top: 9px;
  border-right: 3px solid ${FACE};
`;

const NavGroup = styled.div`
  margin-bottom: 19px;
`;

const NavRow = styled.div`
  display: flex;
  align-items: center;
  gap: 4px;
  height: 19px;
  padding-left: ${p => (p.$nested ? 30 : 20)}px;
  background: ${p => (p.$active ? FACE : 'transparent')};

  ${Glyph} {
    margin-bottom: 1px;
  }

  ${Label} {
    margin-top: 2px;
  }
`;

const FilePane = styled.div`
  flex: 1;
`;

const HeaderRow = styled.div`
  display: grid;
  grid-template-columns: 272px 120px 120px 80px 1fr;
  height: 23px;
  margin-right: 1px;
  background: ${FACE};
`;

const HeaderCell = styled.div`
  display: flex;
  align-items: center;
  padding: 2px 0 0 ${p => (p.$first ? 15 : 3)}px;
  border: 1px solid;
  border-color: #fff ${DARK} ${DARK} ${p => (p.$first ? FACE : '#fff')};
  border-left-width: ${p => (p.$first ? 0 : 1)}px;
  box-shadow: inset -1px -1px 0 #a09e98;
`;

const SortMark = styled.span`
  margin: -5px 0 0 4px;
  border: 3px solid transparent;
  border-top: 0;
  border-bottom-color: #85827c;
`;

const FileRows = styled.div`
  padding: 6px 0 0 14px;
`;

const FileRow = styled.div`
  display: grid;
  grid-template-columns: 258px 120px 120px 1fr;
  align-items: center;
  width: 574px;
  height: 22px;
  color: ${p => (p.$active ? '#fff' : '#000')};
  background: ${p => (p.$active ? FACE : 'transparent')};
`;

const FileName = styled.div`
  display: flex;
  align-items: center;
  gap: 2px;
  padding-left: 4px;
  color: #000;

  ${Glyph} {
    margin-bottom: 1px;
  }
`;

const FileValue = styled.div`
  display: flex;
  padding-left: 4px;
`;

const FileSize = styled.div`
  display: flex;
  justify-content: flex-end;
  padding-right: 3px;
`;

const Details = styled.div`
  display: flex;
  flex: none;
  height: 53px;
  margin-right: -1px;
  padding: 2px 0 0 20px;
  background: #fff;
  border-top: 4px solid ${FACE};
`;

const DetailColumn = styled.div`
  display: flex;
  flex-direction: column;
  gap: 5px;
  align-items: ${p => (p.$right ? 'flex-end' : 'flex-start')};
  width: ${p => (p.$wide ? '103px' : p.$value ? '136px' : 'auto')};
  margin-left: ${p => (p.$wide ? 14 : 0)}px;
  margin-right: ${p => (p.$right || p.$created ? 4 : 0)}px;
  padding-top: 5px;
`;

const DialogWindow = styled.div`
  ${windowFrame}
  left: 435px;
  top: 296px;
  width: 416px;
  height: 145px;
`;

const DialogBody = styled.div`
  display: flex;
  align-items: center;
  gap: 7px;
  height: 78px;
  padding-left: 20px;
  background: #fff;
`;

const Message = styled.div`
  display: flex;
  flex-direction: column;
  padding-top: 2px;
`;

const DialogFooter = styled.div`
  display: flex;
  justify-content: flex-end;
  padding: 10px 9px 0 0;
`;

const OkButton = styled.div`
  display: flex;
  align-items: center;
  justify-content: center;
  width: 75px;
  height: 23px;
  padding-right: 2px;
  border: 1px solid #000;
  box-shadow: inset 1px 1px 0 #fff, inset -1px -1px 0 ${DARK}, inset -2px -2px 0 ${MID};
`;

const WatermarkRow = styled.div`
  position: absolute;
  left: 1039px;
  top: 607px;
  display: flex;
  align-items: center;
  opacity: 0.85;
  filter: drop-shadow(0 0 2px rgba(0, 0, 0, 0.4));

  svg {
    margin: 0 4px 0 0;
  }
`;

const MarkWord = styled.div`
  width: ${p => p.$width}px;

  span {
    display: block;
    width: 0;
    color: #fff;
    font-family: 'Liberation Sans', sans-serif;
    font-size: 49px;
    line-height: 36px;
    transform: scaleX(0.59);
    transform-origin: 0 50%;
    -webkit-text-stroke: 1px #fff;
  }
`;

const TaskbarRow = styled.div`
  display: flex;
  align-items: center;
  height: 28px;
  padding: 2px 2px 0 2px;
  background: ${FACE};
  box-shadow: inset 0 1px 0 #dedbd5, inset 0 2px 0 #fff;
`;

const StartButton = styled.div`
  ${raised}
  display: flex;
  align-items: center;
  gap: 1px;
  width: 52px;
  height: 22px;
  padding-left: 1px;
`;

const TaskItems = styled.div`
  display: flex;
  gap: 2px;
  margin-left: 9px;
`;

const TaskItem = styled.div`
  display: flex;
  align-items: center;
  justify-content: center;
  width: 32px;
  height: 22px;
  ${p => p.$raised && raised}
  ${p =>
    p.$pressed &&
    css`
      background: #fff;
      border: 1px solid;
      border-color: ${DARK} #fff #fff ${DARK};
      box-shadow: inset 1px 1px 0 ${MID};
    `}
`;

const Tray = styled.div`
  display: flex;
  align-items: center;
  gap: 7px;
  width: 156px;
  height: 22px;
  margin-left: auto;
  padding-left: 6px;
  border: 1px solid;
  border-color: ${MID} #fff #fff ${MID};
`;

const Clock = styled.div`
  display: flex;
  width: 47px;
  margin-left: 5px;
`;
